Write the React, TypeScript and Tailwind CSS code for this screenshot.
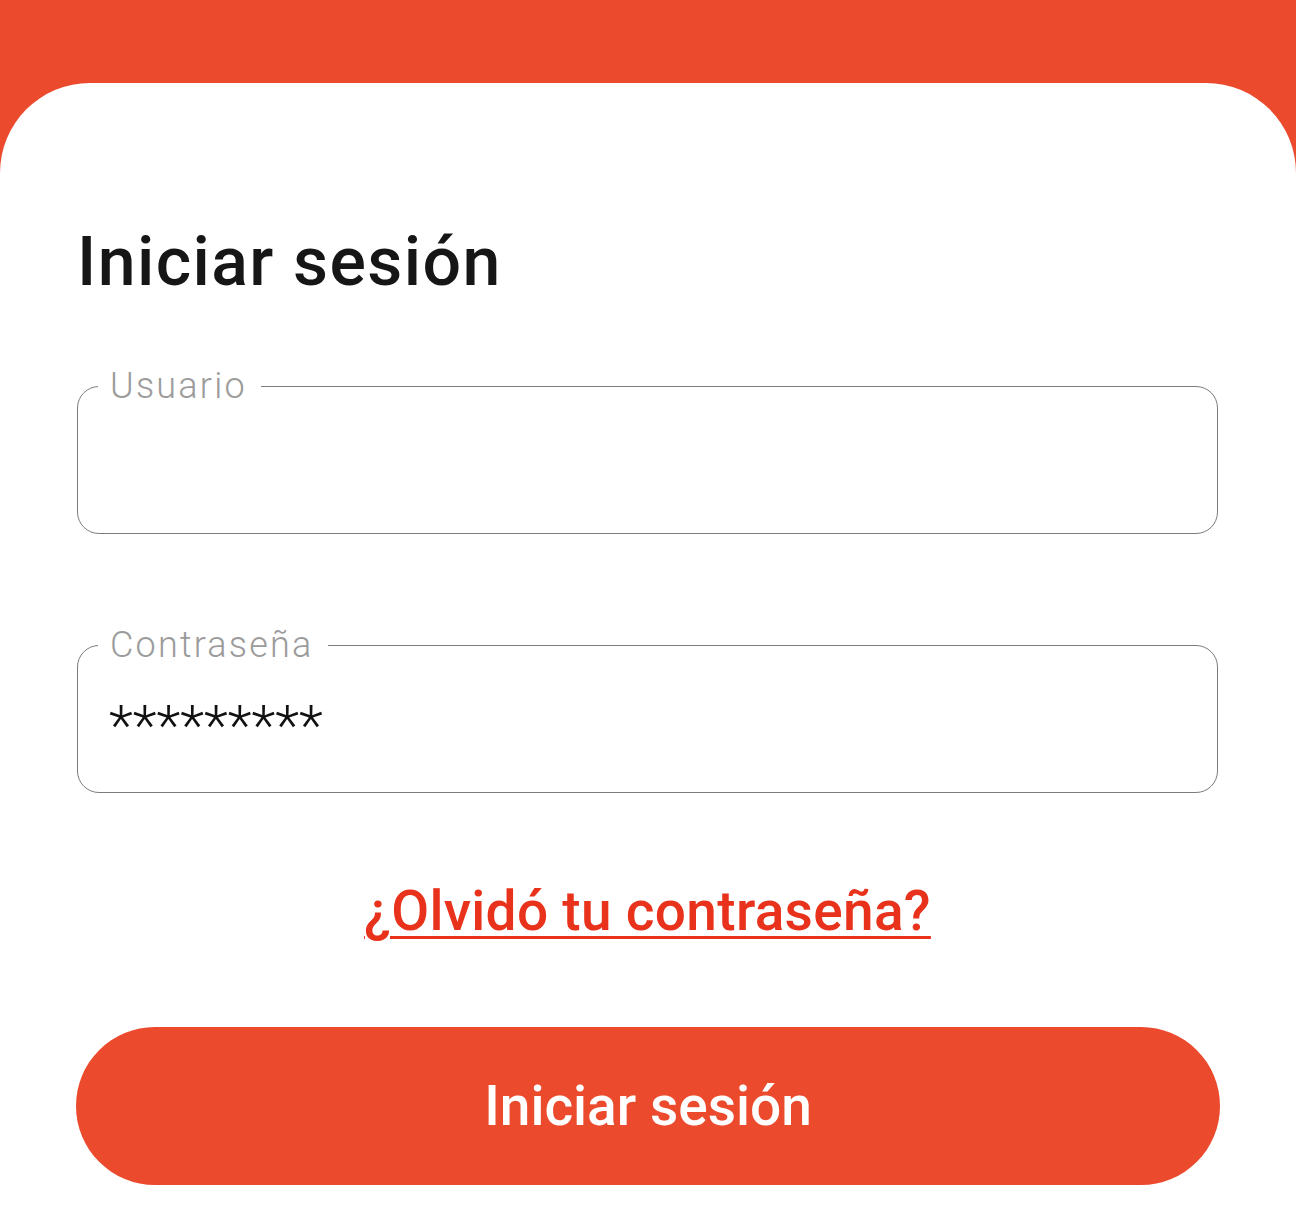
import React from "react";

function OutlinedField({ label, value }: { label: string; value?: string }) {
  return (
    <div className="relative h-[148px] rounded-[22px] border-[1.5px] border-[#7c7c7c]">
      <span className="absolute left-[20px] top-[-22px] bg-white pl-[12px] pr-[14px] text-[36px] font-light leading-[42px] tracking-[2.2px] text-[#9b9b9b]">
        {label}
      </span>
      {value ? (
        <div className="flex h-full items-center pl-[31px] pt-[14px] text-[56px] font-light leading-none tracking-[0px] text-[#111]">
          {value}
        </div>
      ) : null}
    </div>
  );
}

export default function App() {
  return (
    <div
      className="min-h-[1210px] w-full bg-[#eb4a2d]"
      style={{ fontFamily: "Roboto, 'Noto Sans', sans-serif" }}
    >
      <div className="h-[83px]" />
      <div className="flex h-[1127px] flex-col rounded-t-[90px] bg-white pl-[77px] pr-[78px] pt-[145px]">
        <h1 className="text-[68px] font-medium leading-none tracking-[1.4px] text-[#161616]">
          Iniciar sesión
        </h1>
        <div className="mt-[90px]">
          <OutlinedField label="Usuario" />
        </div>
        <div className="mt-[111px]">
          <OutlinedField label="Contraseña" value="*********" />
        </div>
        <div className="mt-[91px] flex justify-center">
          <a
            href="#"
            className="text-[55px] font-medium leading-none tracking-[0.3px] text-[#e8321c] underline decoration-[3px] underline-offset-[6px]"
          >
            ¿Olvidó tu contraseña?
          </a>
        </div>
        <button className="-ml-[1px] mt-[88px] flex h-[158px] w-[calc(100%+3px)] items-center justify-center rounded-full bg-[#eb4a2d] text-[55px] font-medium text-white">
          Iniciar sesión
        </button>
      </div>
    </div>
  );
}
